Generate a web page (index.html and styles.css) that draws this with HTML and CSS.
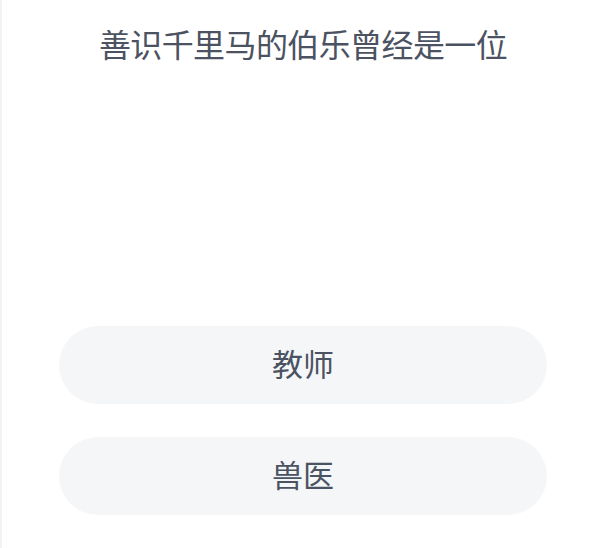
FILE: index.html
```html
<!DOCTYPE html>
<html>
  <head>
    <meta charset="utf-8">
    <link rel="stylesheet" href="styles.css">
  </head>
  <body>
    <div class="quiz">
      <h1 class="question">善识千里马的伯乐曾经是一位</h1>
      <div class="options">
        <button class="option">教师</button>
        <button class="option">兽医</button>
      </div>
    </div>
  </body>
</html>
```

FILE: styles.css
```css
* {
  box-sizing: border-box;
  margin: 0;
  padding: 0;
}

body {
  background: #ffffff;
  color: #4b5261;
  font-family: "Noto Sans CJK SC", "Noto Sans", sans-serif;
  min-height: 100vh;
  border-left: 2px solid #f2f2f2;
}

.quiz {
  padding: 21px 50px 0 57px;
}

.question {
  font-size: 32px;
  font-weight: 400;
  line-height: 45px;
  letter-spacing: -0.6px;
  text-align: center;
  color: #4b5261;
}

.options {
  display: flex;
  flex-direction: column;
  gap: 33px;
  margin-top: 260px;
}

.option {
  height: 78px;
  width: 100%;
  border: none;
  border-radius: 39px;
  background: #f4f6f8;
  color: #4b5261;
  font-family: inherit;
  font-size: 31px;
  line-height: 1;
  padding-bottom: 6px;
  text-align: center;
}
```
